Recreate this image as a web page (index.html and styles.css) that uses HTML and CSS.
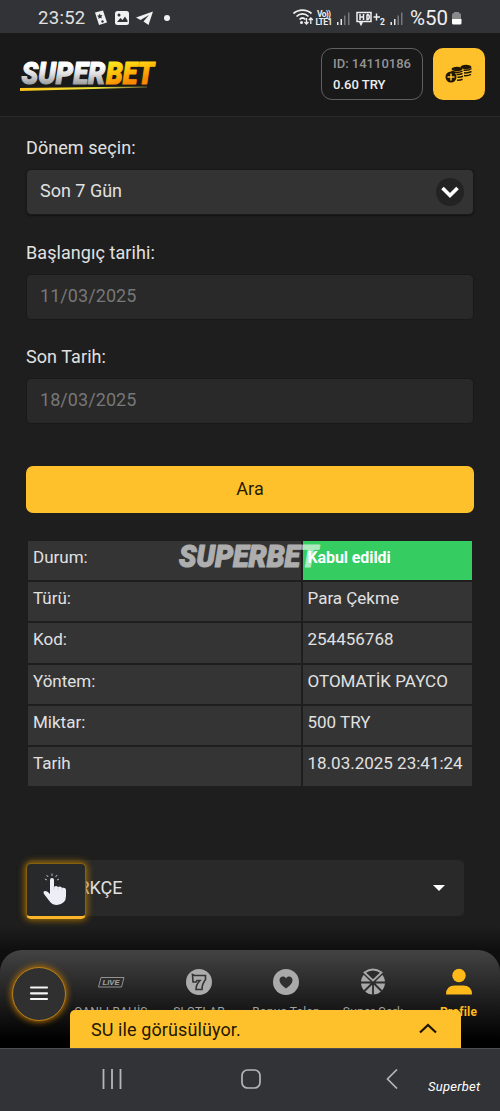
FILE: index.html
```html
<!DOCTYPE html>
<html lang="tr">
<head>
<meta charset="utf-8">
<title>Superbet</title>
<link rel="stylesheet" href="styles.css">
</head>
<body>
<div class="phone">
  <div class="status">
    <span class="clock">23:52</span>
    <svg class="status-left" width="80" height="20" viewBox="0 0 80 20">
      <g fill="#f1f1f1">
        <path d="M2 4.500l8-2 4 12-8 2.500z"/>
        <rect x="22" y="3" width="14" height="14" rx="2.500"/>
        <path d="M43 9.500L60 3.500 55.500 17 50.500 13.500 56 7 47.500 12z"/>
        <circle cx="74" cy="10" r="3"/>
      </g>
      <g fill="#323337">
        <path d="M6.500 5.500l1 1.800 2-.2-1.200 1.600.8 1.800-2-.7-1.600 1.200V9L4 7.800l2-.5z"/>
        <circle cx="9.500" cy="13.500" r="1.200"/>
        <circle cx="26" cy="7" r="1.500"/>
        <path d="M24 14l3.500-4 2 2 2.500-3.500 2.500 4V14z"/>
      </g>
    </svg>
    <svg class="status-right" width="172" height="24" viewBox="0 0 172 24">
      <g fill="none" stroke="#efefef" stroke-width="1.700">
        <path d="M1.500 9.500C6.500 5 14.500 5 19.500 9.500M4.500 12.500c3.500-3.500 8.500-3.500 12 0M7.500 15.500c2-2 4-2 6 0"/>
      </g>
      <circle cx="9.500" cy="18.500" r="1.500" fill="#efefef"/>
      <path d="M14.500 14v6m-2-2l2 2 2-2M18.800 20v-6m-2 2l2-2 2 2" fill="none" stroke="#efefef" stroke-width="1.300"/>
      <text class="tiny" x="25" y="12.500" textLength="14">Vo))</text>
      <text class="tiny" x="23.500" y="20.500" textLength="17">LTE1</text>
      <g fill="#e8e8e8"><path d="M45 18h1.500v3H45zM48.500 15H50v6h-1.500z"/><path fill="#77787c" d="M52 11.500h1.500V21H52zM56 8.500h1.500V21H56z"/></g>
      <path d="M65 8.500h14v9H65zM68 10v6M68 13h3M71.500 10v6M75 10.500v5c3 0 3-5 0-5M67.500 17.500l1.500 3 1.500-3M81.500 13h6.500M84.500 9.500v7" fill="none" stroke="#efefef" stroke-width="1.500"/>
      <text class="tiny" x="88" y="21" textLength="5">2</text>
      <g fill="#e8e8e8"><path d="M98.500 18h1.500v3h-1.500zM102 15h1.500v6H102z"/><path fill="#77787c" d="M105.500 11.500h1.500V21h-1.500zM109 8.500h1.500V21H109z"/></g>
      <text class="battery" x="118" y="20.500" textLength="38" lengthAdjust="spacingAndGlyphs">%50</text>
      <path d="M160 11q0-2 2-2V8h5v1q2 0 2 2v4h-9z" fill="#88898b"/><path d="M160 15h9.500v4q0 1.500-1.500 1.500h-6.500q-1.500 0-1.500-1.500z" fill="#fff"/>
    </svg>
  </div>
  <header class="header">
    <svg class="logo" width="140" height="34" viewBox="0 0 140 34">
      <defs>
        <linearGradient id="silver" gradientUnits="userSpaceOnUse" x1="0" y1="3" x2="0" y2="27"><stop offset=".2" stop-color="#fff"/><stop offset=".55" stop-color="#dededf"/><stop offset="1" stop-color="#97989b"/></linearGradient>
        <linearGradient id="gold" gradientUnits="userSpaceOnUse" x1="86" y1="3" x2="92" y2="28"><stop offset=".1" stop-color="#ffe61e"/><stop offset=".5" stop-color="#ffc50c"/><stop offset="1" stop-color="#f88a00"/></linearGradient>
        <linearGradient id="line" x1="0" x2="1" y1="0" y2="0"><stop stop-color="#ffc21b"/><stop offset=".6" stop-color="#eee537"/><stop offset="1" stop-color="#6e6937"/></linearGradient>
      </defs>
      <text class="brand"><tspan x="1.500" y="25.500" textLength="84" lengthAdjust="spacingAndGlyphs" fill="url(#silver)" stroke="url(#silver)">SUPER</tspan><tspan x="86" y="25.500" textLength="48" lengthAdjust="spacingAndGlyphs" fill="url(#gold)" stroke="url(#gold)">BET</tspan></text>
      <path d="M0 30l127-1.500v1L0 33z" fill="url(#line)"/>
    </svg>
    <div class="account"><span class="account-id">ID: 14110186</span><span class="balance">0.60 TRY</span></div>
    <div class="deposit">
      <svg width="28" height="20" viewBox="0 0 28 20">
        <g fill="#201704"><ellipse cx="21" cy="3" rx="5.500" ry="2.200"/><ellipse cx="12" cy="5" rx="5.500" ry="2.200"/></g>
        <g fill="none" stroke="#201704" stroke-width="1.500">
          <path d="M18.500 6q4.500 1 8-1.500M19 8.800q4 .5 7.500-1.300M19 11.600q4 .3 7-1.200M6.500 7.300q5.500 2.500 11-.2M11.500 10.500q3.500.2 6-1M12.500 13.300q3 .2 5.500-1M12 16.200q3 .2 5.500-1"/>
        </g>
        <circle cx="6" cy="13" r="5.500" fill="#201704"/>
        <path d="M6 9.500v7M2.500 13h7" stroke="#ffc12b" stroke-width="1.500"/>
      </svg>
    </div>
  </header>
  <main class="content">
    <label class="label">Dönem seçin:</label>
    <div class="field select"><span>Son 7 Gün</span>
      <svg width="28" height="28" viewBox="0 0 28 28"><circle cx="14" cy="14" r="14" fill="#232323"/><path d="M6.500 10l7.500 7.500L21.500 10" fill="none" stroke="#fff" stroke-width="3.600"/></svg>
    </div>
    <label class="label">Başlangıç tarihi:</label>
    <div class="field date">11/03/2025</div>
    <label class="label">Son Tarih:</label>
    <div class="field date">18/03/2025</div>
    <div class="search">Ara</div>
    <div class="result">
      <div class="cell">Durum:</div><div class="cell accepted">Kabul edildi</div>
      <div class="cell">Türü:</div><div class="cell">Para Çekme</div>
      <div class="cell">Kod:</div><div class="cell">254456768</div>
      <div class="cell">Yöntem:</div><div class="cell">OTOMATİK PAYCO</div>
      <div class="cell">Miktar:</div><div class="cell">500 TRY</div>
      <div class="cell">Tarih</div><div class="cell when">18.03.2025 23:41:24</div>
      <svg class="watermark" width="148" height="32" viewBox="0 0 148 32">
        <text class="brand" x="3" y="27" textLength="139" lengthAdjust="spacingAndGlyphs" fill="#fff" stroke="#fff">SUPERBET</text>
      </svg>
    </div>
    <div class="language"><span>TÜRKÇE</span><i class="caret"></i>
      <div class="tap">
        <svg width="26" height="34" viewBox="0 0 26 34">
          <path d="M4 7L1.800 6M5.200 4L3.500 2M9 3V.5M12.500 4l1.700-2M14 7l2-1" stroke="#b9babd" stroke-width="1"/>
          <path d="M7 7q0-2 2-2t2 2v7q2-2 4 0 2-1.500 4 .8 4-.8 4 2.200v6q0 8-9 9-5 0-8-4.500L1 21q-1.500-3 1.500-3 2 0 4.500 3z" fill="#eeeef6"/>
          <path d="M11 14v3M15 14.500V17M19 15v2.500" stroke="#c9c9d5" stroke-width=".7"/>
        </svg>
      </div>
    </div>
  </main>
  <div class="dock">
  <nav class="nav">
    <div class="menu"><svg width="20" height="16" viewBox="0 0 20 16"><path d="M2 1.500h16M2 7.300h16M2 13h16" stroke="#f5f5f5" stroke-width="2.200" stroke-linecap="round"/></svg></div>
    <div class="tabs">
      <div class="tab"><svg width="28" height="28" viewBox="0 0 28 28"><path d="M4 9.500h23l-2.500 9.500H1.500z" fill="none" stroke="#929292"/><text class="live" x="5.500" y="17.300" textLength="17" lengthAdjust="spacingAndGlyphs">LIVE</text></svg><span>CANLI BAHİS</span></div>
      <div class="tab"><svg width="28" height="28" viewBox="0 0 28 28"><circle cx="14" cy="14" r="13" fill="#ababab"/><path d="M7.500 6.500l2 1h11v4q-3.500 4.500-3.500 10h-6q0-5 4-9h-3l-1 1.500H8z" fill="#ababab" stroke="#333" stroke-width="1.600"/></svg><span>SLOTLAR</span></div>
      <div class="tab"><svg width="28" height="28" viewBox="0 0 28 28"><circle cx="14" cy="14" r="13" fill="#aaa"/><path d="M14 20.500Q7.500 16 7.500 12.200C7.500 8 12.500 7.500 14 10.500c1.500-3 6.500-2.500 6.500 1.700q0 3.800-6.500 8.300z" fill="#303030"/></svg><span>Bonus Talep</span></div>
      <div class="tab"><svg width="28" height="28" viewBox="0 0 28 28"><circle cx="14" cy="14.500" r="12" fill="#a9a9a9"/><path d="M14 14.500v13M1 14.500h26M5 5.500l18 18M23 5.500l-18 18" stroke="#2c2c2c" stroke-width="1.800"/><path d="M3.500 5.500Q14-4 24.500 5.500L14 15.500z" fill="#2c2c2c"/><path d="M5.500 4.500Q14-1.500 22.500 4.500L14 12.500z" fill="#2c2c2c" stroke="#a9a9a9" stroke-width="1.800"/></svg><span>Super Çark</span></div>
      <div class="tab active"><svg width="28" height="28" viewBox="0 0 28 28"><circle cx="14" cy="7.500" r="6.700" fill="#ffba19"/><path d="M1 26.500q0-9 9-9h8q9 0 9 9z" fill="#ffba19"/></svg><span>Profile</span></div>
    </div>
    <div class="chat"><span>SU ile görüsülüyor.</span><svg width="18" height="12" viewBox="0 0 18 12"><path d="M1 9.500L9 2l8 7.500" fill="none" stroke="#201600" stroke-width="2.300"/></svg></div>
  </nav>
  </div>
  <footer class="system">
    <svg width="20" height="20" viewBox="0 0 20 20"><path d="M1.500 0v20M10 0v20M18.500 0v20" stroke="#b6b6b8" stroke-width="1.800"/></svg>
    <svg width="20" height="20" viewBox="0 0 20 20"><rect x="1" y="1" width="18" height="18" rx="5.500" fill="none" stroke="#b6b6b8" stroke-width="1.700"/></svg>
    <svg width="12" height="20" viewBox="0 0 12 20"><path d="M11 .5L1.500 10l9.500 9.500" fill="none" stroke="#b6b6b8" stroke-width="1.700"/></svg>
    <span>Superbet</span>
  </footer>
</div>
</body>
</html>
```
FILE: styles.css
```css
* { box-sizing: border-box; }
body { margin: 0; background: #1e1e1e; font-family: Roboto, "Noto Sans", sans-serif; color: #e1e1e1; }
svg { display: block; flex: none; }
.phone { width: 500px; height: 1111px; display: flex; flex-direction: column; overflow: hidden; }

.status { height: 33px; flex: none; background: #323337; display: flex; padding: 0 28px 0 38px; }
.clock { width: 55px; font: 18.500px/36px Roboto, sans-serif; letter-spacing: .3px; }
.status-left { margin-top: 8px; }
.status-right { margin: 4px 0 0 119px; }
.tiny { font: bold 8.500px Roboto, sans-serif; fill: #efefef; }
.battery { font: 19.500px Roboto, sans-serif; fill: #efefef; }

.header { height: 84px; flex: none; background: #191919; border-bottom: 1px solid #292929; display: flex; align-items: flex-start; padding: 15px 15px 0 20px; }
.logo { margin-top: 10px; overflow: visible; }
.brand { font: italic 900 31px Roboto, sans-serif; stroke-width: 1.200px; stroke-linejoin: round; }
.account { width: 102px; height: 52px; margin-left: 161px; border: 1px solid #606060; border-radius: 11px; padding: 4px 0 0 11px; font-weight: 500; font-size: 13px; line-height: 21px; display: flex; flex-direction: column; }
.account-id { color: #949494; }
.balance { color: #eee; }
.deposit { width: 52px; height: 52px; margin-left: 10px; border-radius: 10px; background: #ffc12b; display: flex; align-items: center; justify-content: center; }

.content { height: 809px; flex: none; padding: 17px 26px 0; font-size: 18px; }
.label { display: block; height: 35px; line-height: 28px; letter-spacing: .07px; }
.field { height: 46px; padding: 0 13px 4px; border: 1px solid #191919; border-radius: 5px; display: flex; align-items: center; font-size: 18px; }
.select { background: #333; padding-right: 9px; justify-content: space-between; box-shadow: 0 1px 2px #141414; }
.select svg { margin-top: 3px; }
.date { background: #292929; color: #777; letter-spacing: .07px; }
.field + .label { margin-top: 24px; }
.date + .label { margin-top: 23px; }
.search { height: 47px; margin-top: 42px; border-radius: 7px; background: #ffc12b; color: #261b00; text-align: center; line-height: 45px; letter-spacing: .1px; }
.result { position: relative; margin: 28px 2px 0; display: grid; grid-template-columns: 273px 169.500px; grid-auto-rows: 39.200px; gap: 2px 1.500px; }
.cell { background: #343434; padding: 0 5px; font-size: 17px; line-height: 32px; white-space: nowrap; }
.accepted { background: #35cc62; color: #fff; font-weight: bold; font-size: 16px; line-height: 34px; letter-spacing: -.1px; }
.watermark { position: absolute; left: 148px; top: -1px; opacity: .6; overflow: visible; }
.language { position: relative; width: 438px; height: 56px; margin-top: 74px; border-radius: 5px; background: #292929; padding: 0 19px 0 30px; display: flex; align-items: center; justify-content: space-between; }
.language span { margin-top: -2px; }
.caret { border: 6px solid transparent; border-top-color: #fff; border-bottom: 0; }
.tap { position: absolute; left: 0; top: 3px; width: 60px; height: 56px; border-radius: 5px; background: #27292b; border: 1px solid #86600d; border-bottom: 3px solid #ffb52a; box-shadow: 0 0 7px 1px #a87200; display: flex; align-items: center; justify-content: center; }

.dock { height: 122px; flex: none; padding-top: 24px; background: linear-gradient(#1e1e1e, #0f0f0f 24px, #050505); }
.nav { position: relative; height: 98px; display: flex; border-radius: 22px 22px 0 0; background: linear-gradient(#434343, #000 92%); }
.menu { width: 54px; height: 54px; flex: none; margin: 17px 0 0 12px; border-radius: 50%; background: #303030; border: 1.500px solid #b97f1b; box-shadow: 0 0 6px 1px #b37000; display: flex; align-items: center; justify-content: center; }
.menu svg { margin-top: -1px; }
.tabs { display: grid; grid-template-columns: 88px 88px 86px 88px 83px; margin-left: 1px; }
.tab { display: flex; flex-direction: column; align-items: center; padding-top: 18px; font-size: 12px; color: #a0a0a0; white-space: nowrap; }
.tab span { margin-top: 9px; line-height: 14px; letter-spacing: .2px; }
.active { color: #ffba19; font-weight: bold; }
.live { font: italic bold 8px "Liberation Sans", sans-serif; fill: #a4a4a4; }
.chat { position: absolute; left: 70px; bottom: 0; width: 391px; height: 38px; border-radius: 5px 5px 0 0; background: #ffc12b; color: #211700; display: flex; align-items: center; justify-content: space-between; padding: 0 24px 0 21px; font-size: 18px; letter-spacing: .1px; }

.system { height: 63px; flex: none; background: #323337; border-top: 1px solid #4c4d50; display: flex; padding: 20px 20px 0 102px; }
.system svg + svg { margin-left: 119px; }
.system svg:nth-child(3) { margin-left: 125px; }
.system span { margin: 10px 0 0 30px; font: italic 13px/16px Roboto, sans-serif; color: #fff; letter-spacing: .25px; }
```
